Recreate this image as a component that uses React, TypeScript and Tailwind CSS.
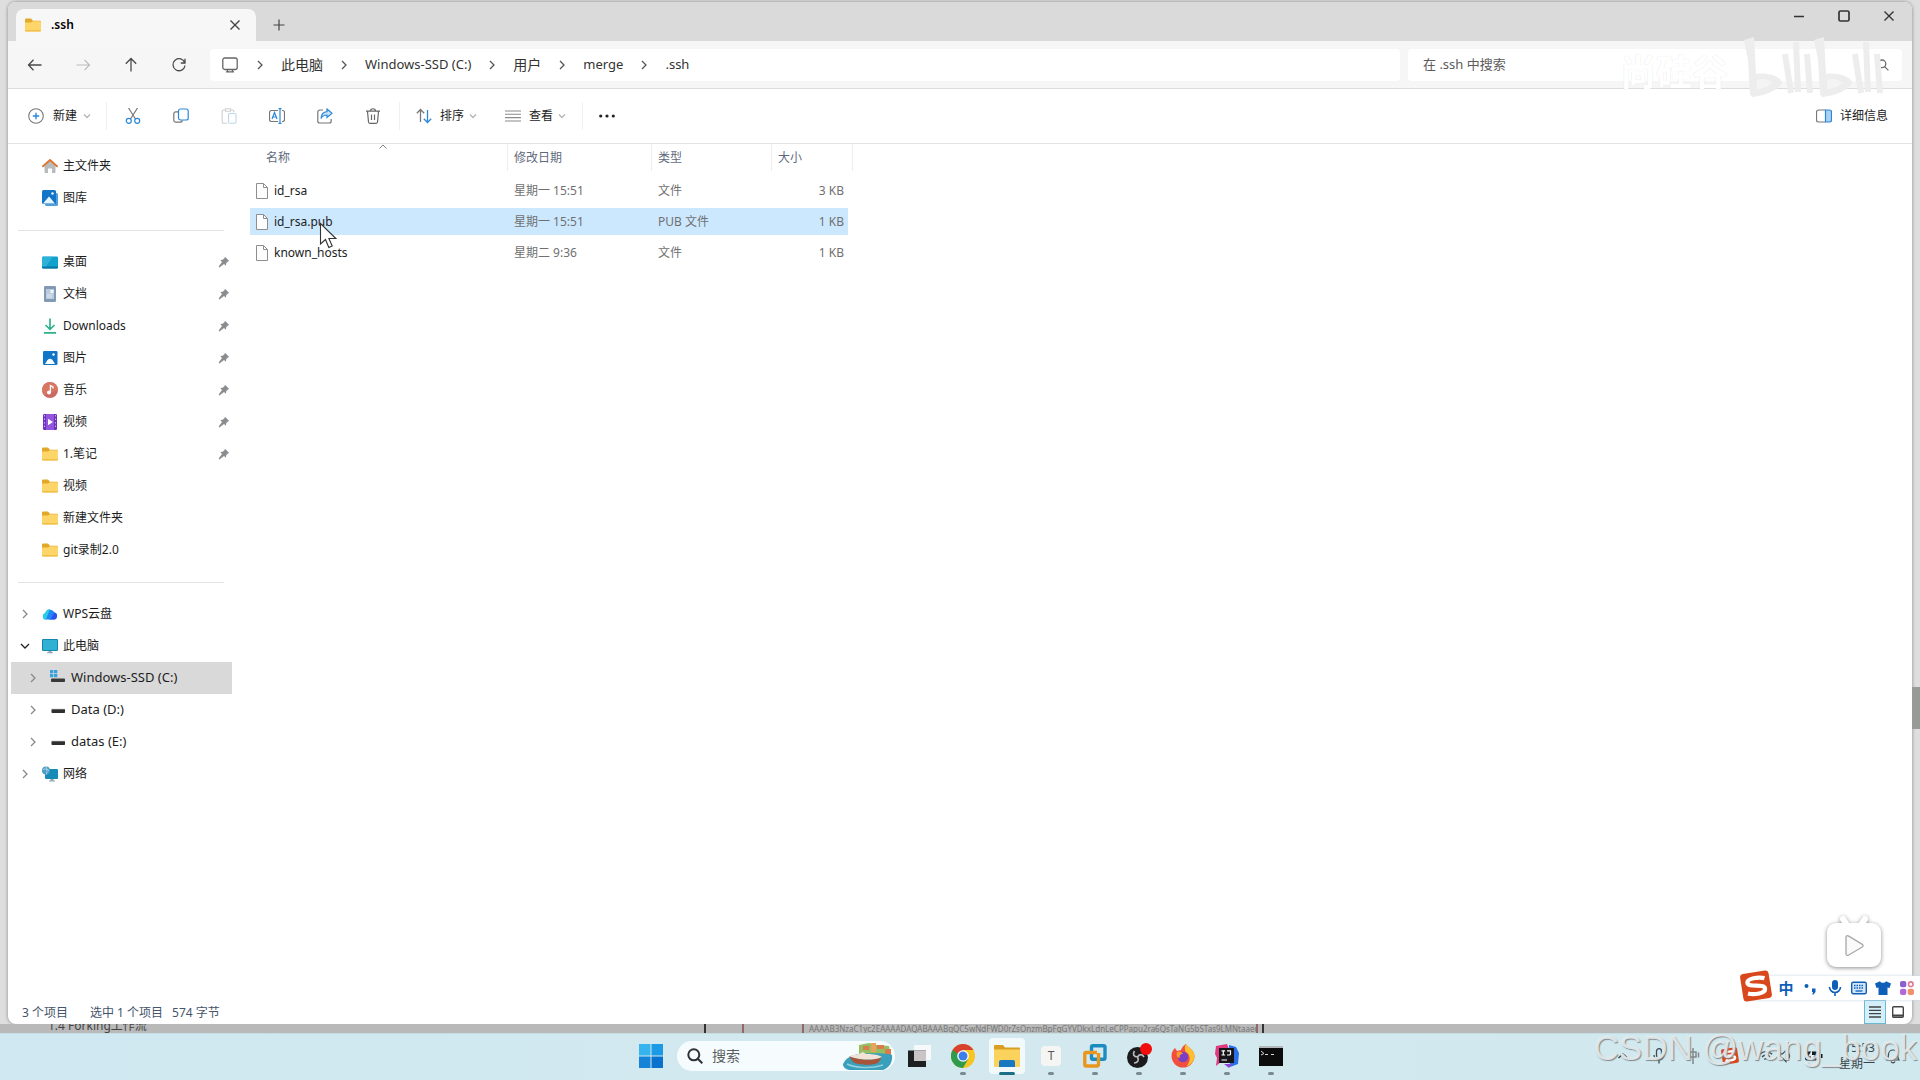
import React from 'react';

interface NavItem {
  label: string;
  icon: React.ReactNode;
  pinned?: boolean;
}

interface FileItem {
  name: string;
  date: string;
  type: string;
  size: string;
  selected?: boolean;
}

/* ---------- small glyphs ---------- */

const Chevron = ({ className = '' }: { className?: string }) => (
  <svg viewBox="0 0 8 10" className={`h-[10px] w-2 ${className}`} fill="none" stroke="currentColor" strokeWidth="1.3">
    <path d="M2 1l4 4-4 4" />
  </svg>
);

const SmallDown = () => (
  <svg viewBox="0 0 8 8" className="h-2 w-2 text-[#b5b5b5]" fill="none" stroke="currentColor" strokeWidth="1.3">
    <path d="M1 2.5l3 3 3-3" />
  </svg>
);

const Close = ({ className = '' }: { className?: string }) => (
  <svg viewBox="0 0 12 12" className={`h-3 w-3 ${className}`} fill="none" stroke="currentColor" strokeWidth="1.4">
    <path d="M1.5 1.5l9 9M10.5 1.5l-9 9" />
  </svg>
);

const Folder = () => (
  <svg viewBox="0 0 16 16" className="h-4 w-4">
    <path d="M0 2.500a1 1 0 0 1 1-1h5l2 2.200h7a1 1 0 0 1 1 1V7H0z" fill="#e3a92b" />
    <path d="M0 5.500h6l1.600-1.200H15a1 1 0 0 1 1 1V13.500a1 1 0 0 1-1 1H1a1 1 0 0 1-1-1z" fill="#fdd569" />
    <path d="M0 13.100h16v.4a1 1 0 0 1-1 1H1a1 1 0 0 1-1-1z" fill="#efbf4a" />
  </svg>
);

const Pin = () => (
  <svg viewBox="0 0 12 12" className="h-3 w-3 text-[#8a8d8f]" fill="currentColor">
    <path d="M7 .8L11.2 5l-1.4.6-1.6 1.7-.3 2.4L6 8 1.4 11.4.6 10.6 4 6 2.3 4.1l2.4-.3 1.7-1.6z" />
  </svg>
);

const Home = () => (
  <svg viewBox="0 0 16 16" className="h-4 w-4">
    <path d="M2.500 7L8 2.500 13.500 7v7.200a.8.8 0 0 1-.8.8H10v-4.500H6V15H3.300a.8.8 0 0 1-.8-.8z" fill="#b9bcbe" />
    <path d="M1 8.300L8 2l7 6.300" fill="none" stroke="#dc7a33" strokeWidth="2" strokeLinecap="round" strokeLinejoin="round" />
  </svg>
);

const Gallery = () => (
  <svg viewBox="0 0 16 16" className="h-4 w-4">
    <rect x="3" y="3" width="13" height="13" rx="1.5" fill="#4f9fdc" />
    <rect x="0" y="0" width="14" height="14" rx="1.5" fill="#1175c8" />
    <path d="M1 13.500L7 6.500l6 7z" fill="#eaf6ff" />
    <circle cx="10.5" cy="3.5" r="1.2" fill="#fff" />
  </svg>
);

const Desktop = () => (
  <svg viewBox="0 0 16 16" className="h-4 w-4">
    <rect x="0" y="2.5" width="16" height="12" rx="1.2" fill="#12a0cc" />
    <path d="M0 12.500h16v.8a1.200 1.200 0 0 1-1.200 1.200H1.200A1.200 1.200 0 0 1 0 13.300z" fill="#0b75a5" />
    <path d="M1 2.500h10L4 12.500H0v-9z" fill="#3dbde0" opacity=".6" />
  </svg>
);

const Docs = () => (
  <svg viewBox="0 0 16 16" className="h-4 w-4">
    <rect x="2" y="0" width="12" height="16" rx="1.2" fill="#8199b3" />
    <rect x="4" y="3" width="8" height="10" fill="#b9cbdc" />
    <path d="M8.500 4h3v3h-3z" fill="#f1f6fb" />
    <path d="M5 9h5M5 11h5" stroke="#dfe9f2" />
  </svg>
);

const Download = () => (
  <svg viewBox="0 0 16 16" className="h-4 w-4" fill="none" stroke="#2fb08c" strokeWidth="1.7">
    <path d="M8 .5v10.500M3.500 7L8 11.300 12.500 7M2 14.800h12" />
  </svg>
);

const Picture = () => (
  <svg viewBox="0 0 16 16" className="h-4 w-4">
    <rect x="1" y="1" width="14.5" height="14" rx="1.3" fill="#1175c8" />
    <path d="M3 14l2.500-4Q8 7.500 10.500 10l2.500 4z" fill="#fff" />
    <circle cx="11.5" cy="4.5" r="1.2" fill="#fff" />
  </svg>
);

const Music = () => (
  <svg viewBox="0 0 16 16" className="h-4 w-4">
    <circle cx="8" cy="8" r="8" fill="#c96a63" />
    <path d="M8 0a8 8 0 0 1 8 8L2 13.300A8 8 0 0 1 8 0z" fill="#dc7d62" opacity=".7" />
    <circle cx="7" cy="10.5" r="2" fill="#fff" />
    <path d="M8.400 10.500V3.500l2.600 1.300v1.800" fill="none" stroke="#fff" strokeWidth="1.3" />
  </svg>
);

const Video = () => (
  <svg viewBox="0 0 16 16" className="h-4 w-4">
    <rect x="1" y="0" width="14" height="16" rx="1.2" fill="#6f32bd" />
    <rect x="4" y="0" width="8" height="16" fill="#9355dd" />
    <path d="M2.500 1v14M13.500 1v14" stroke="#c9a8ee" strokeWidth="1" strokeDasharray="1.5 2" />
    <path d="M6 4.800L11 8l-5 3.200z" fill="#fff" />
  </svg>
);

const Cloud = () => (
  <svg viewBox="0 0 16 16" className="h-4 w-4">
    <path d="M4 13.500a3.200 3.200 0 0 1-.7-6.300A5 5 0 0 1 12.500 6.500 3.600 3.600 0 0 1 12 13.500z" fill="#1f87f5" />
    <path d="M4 13.500a3.200 3.200 0 0 1-.7-6.300A5 5 0 0 1 8 3z" fill="#2bcbe8" />
    <path d="M6 13.500c5 0 4-5 6.500-7A3.600 3.600 0 0 1 12 13.500z" fill="#2b52f0" />
  </svg>
);

const Monitor = () => (
  <svg viewBox="0 0 16 16" className="h-4 w-4">
    <rect x="0" y="1" width="16" height="12" rx="1" fill="#1487b0" />
    <rect x="1" y="2" width="14" height="10" fill="#2eb1d2" />
    <path d="M6.500 13h3v1.500h-3zM5 14.300h6v1H5z" fill="#8fa7b3" />
  </svg>
);

const SystemDrive = () => (
  <svg viewBox="0 0 16 16" className="h-4 w-4">
    <path d="M0 0h3.300v3.300H0zM4 0h3.300v3.300H4zM0 4h3.300v3.300H0zM4 4h3.300v3.300H4z" fill="#39a0e0" />
    <rect x="1" y="8.5" width="14" height="3.5" rx=".8" fill="#3a3a3a" />
  </svg>
);

const Drive = () => (
  <svg viewBox="0 0 16 16" className="h-4 w-4">
    <rect x="1.5" y="7" width="13.5" height="4" rx=".8" fill="#2f2f2f" />
    <path d="M2 7.300h12.500" stroke="#8a8a8a" strokeWidth=".7" />
  </svg>
);

const Network = () => (
  <svg viewBox="0 0 16 16" className="h-4 w-4">
    <rect x="3" y="3" width="13" height="10" rx="1" fill="#178bb8" />
    <path d="M8.500 13h3v1.500h-3zM7 14.400h6v1H7z" fill="#8fa7b3" />
    <circle cx="4" cy="4.5" r="4" fill="#4c9cc4" />
    <path d="M1 3.500c2-1 4-.500 6 1M4 .5c1.500 2.500 1 6 .300 8" stroke="#bfe0ef" strokeWidth=".8" fill="none" />
  </svg>
);

const FilePage = () => (
  <svg viewBox="0 0 14 16" className="h-4 w-[14px] shrink-0" fill="#fdfdfd" stroke="#8e8e8e" strokeWidth="1">
    <path d="M1.500.5h7L12.500 4.500v11h-11z" />
    <path d="M8.500.5v4h4" fill="none" />
  </svg>
);

const SogouS = ({ className = '' }: { className?: string }) => (
  <svg viewBox="0 0 30 30" className={className}>
    <g transform="rotate(-9 15 15)">
      <rect x="1.5" y="2" width="27" height="26" rx="3" fill="#d9481c" />
      <path d="M24 9C19 6.800 7.500 6.500 7.500 11c0 4.800 15.500 2.500 15.500 7.500 0 4.800-11 4.800-16.500 2.300" fill="none" stroke="#fff" strokeWidth="4" />
    </g>
  </svg>
);

/* ---------- data ---------- */

const top: NavItem[] = [
  { label: '主文件夹', icon: <Home /> },
  { label: '图库', icon: <Gallery /> },
];

const quick: NavItem[] = [
  { label: '桌面', icon: <Desktop />, pinned: true },
  { label: '文档', icon: <Docs />, pinned: true },
  { label: 'Downloads', icon: <Download />, pinned: true },
  { label: '图片', icon: <Picture />, pinned: true },
  { label: '音乐', icon: <Music />, pinned: true },
  { label: '视频', icon: <Video />, pinned: true },
  { label: '1.笔记', icon: <Folder />, pinned: true },
  { label: '视频', icon: <Folder /> },
  { label: '新建文件夹', icon: <Folder /> },
  { label: 'git录制2.0', icon: <Folder /> },
];

const files: FileItem[] = [
  { name: 'id_rsa', date: '星期一 15:51', type: '文件', size: '3 KB' },
  { name: 'id_rsa.pub', date: '星期一 15:51', type: 'PUB 文件', size: '1 KB', selected: true },
  { name: 'known_hosts', date: '星期二 9:36', type: '文件', size: '1 KB' },
];

const crumbs = [
  { label: '此电脑', size: 'text-sm' },
  { label: 'Windows-SSD (C:)', size: 'text-[13px]' },
  { label: '用户', size: 'text-sm' },
  { label: 'merge', size: 'text-[13px]' },
  { label: '.ssh', size: 'text-[13px]' },
];

/* ---------- window parts ---------- */

const TitleBar = () => (
  <div className="flex h-[39px] items-end justify-between bg-[#dadada] pl-2">
    <div className="flex items-end">
      <div className="flex h-8 w-60 items-center rounded-t-lg bg-[#f7f7f7] pr-[13px] pl-[9px]">
        <Folder />
        <span className="ml-[10px] flex-1 text-xs font-semibold">.ssh</span>
        <button aria-label="关闭标签页" className="p-[2px] text-[#444]"><Close /></button>
      </div>
      <button aria-label="新建标签页" className="flex h-8 w-[45px] items-center justify-center text-[#444]">
        <svg viewBox="0 0 12 12" className="h-3 w-3" stroke="currentColor" strokeWidth="1.2"><path d="M6 .5v11M.5 6h11" /></svg>
      </button>
    </div>
    <div className="flex h-full items-start text-[#333]">
      <button aria-label="最小化" className="flex h-7 w-[45px] items-center justify-center">
        <svg viewBox="0 0 12 12" className="h-3 w-3" stroke="currentColor" strokeWidth="1.6"><path d="M1 6.500h10" /></svg>
      </button>
      <button aria-label="最大化" className="flex h-7 w-[45px] items-center justify-center">
        <svg viewBox="0 0 12 12" className="h-3 w-3" fill="none" stroke="currentColor" strokeWidth="1.7"><rect x="1" y="1" width="10" height="10" rx="1.5" /></svg>
      </button>
      <button aria-label="关闭" className="flex h-7 w-[46px] items-center justify-center"><Close /></button>
    </div>
  </div>
);

const NavBar = () => (
  <div className="flex h-12 items-center border-b border-[#dcdcdc] bg-[#f6f6f6] pr-[10px]">
    <div className="flex w-[202px] items-center pl-[3px] text-[#4a4a4a]">
      <button aria-label="后退" className="flex w-12 justify-center">
        <svg viewBox="0 0 16 16" className="h-4 w-4" fill="none" stroke="currentColor" strokeWidth="1.3"><path d="M14.500 8h-13M6.500 2.800L1.500 8l5 5.200" /></svg>
      </button>
      <button aria-label="前进" className="flex w-12 justify-center text-[#bcbcbc]">
        <svg viewBox="0 0 16 16" className="h-4 w-4" fill="none" stroke="currentColor" strokeWidth="1.2"><path d="M1.500 8h13M9.500 2.800l5 5.200-5 5.200" /></svg>
      </button>
      <button aria-label="向上" className="flex w-12 justify-center">
        <svg viewBox="0 0 16 16" className="h-4 w-4" fill="none" stroke="currentColor" strokeWidth="1.3"><path d="M8 14.500v-13M2.800 6.800L8 1.500l5.200 5.300" /></svg>
      </button>
      <button aria-label="刷新" className="flex w-12 justify-center">
        <svg viewBox="0 0 16 16" className="h-4 w-4" fill="none" stroke="currentColor" strokeWidth="1.3"><path d="M13.800 6A6 6 0 1 0 14 8.500M14 1.800V6h-4.200" /></svg>
      </button>
    </div>
    <nav aria-label="路径" className="flex h-8 flex-1 items-center rounded bg-white pl-3 text-[#333]">
      <svg viewBox="0 0 16 16" className="mr-px h-4 w-4 shrink-0" fill="none" stroke="#666" strokeWidth="1.3">
        <rect x=".8" y="1" width="14.4" height="11.5" rx="2" /><path d="M4 14.800h8M5.500 12.500v2M10.500 12.500v2" />
      </svg>
      {crumbs.map((c) => (
        <React.Fragment key={c.label}>
          <Chevron className="mx-[17px] shrink-0 text-[#555]" />
          <a href="#" className={`${c.size} whitespace-nowrap`}>{c.label}</a>
        </React.Fragment>
      ))}
    </nav>
    <label className="ml-2 flex h-8 w-[494px] items-center rounded bg-white pr-[13px] pl-[15px]">
      <input aria-label="在 .ssh 中搜索" placeholder="在 .ssh 中搜索" className="flex-1 bg-transparent text-[13px] outline-none placeholder:text-[#5c5c5c]" />
      <svg viewBox="0 0 12 12" className="h-3 w-3" fill="none" stroke="#6d6d6d" strokeWidth="1.3"><circle cx="5" cy="4.8" r="3.8" /><path d="M7.600 7.600l3.800 3.800" /></svg>
    </label>
  </div>
);

const Divider = () => <div className="h-7 w-px bg-[#f1f1f1]" />;

const Toolbar = () => (
  <div className="flex h-[55px] shrink-0 items-center border-b border-[#e3e3e3] bg-white pr-6 pl-5 text-xs text-[#222]">
    <button className="flex w-[78px] items-center">
      <svg viewBox="0 0 16 16" className="h-4 w-4" fill="none" stroke="#777" strokeWidth="1.1"><circle cx="8" cy="8" r="7.3" /><path d="M8 4.800v6.400M4.800 8h6.400" stroke="#2b88d8" strokeWidth="1.4" /></svg>
      <span className="mr-[6px] ml-[9px]">新建</span>
      <SmallDown />
    </button>
    <Divider />
    <div className="flex flex-1 items-center">
      <button aria-label="剪切" className="ml-[2px] flex w-12 justify-center">
        <svg viewBox="0 0 16 16" className="h-4 w-4" fill="none" strokeWidth="1.2"><path d="M3.500 0l7 11M12.500 0l-7 11" stroke="#777" /><circle cx="3.8" cy="12.8" r="2.5" stroke="#2b88d8" /><circle cx="12.2" cy="12.8" r="2.5" stroke="#2b88d8" /></svg>
      </button>
      <button aria-label="复制" className="flex w-12 justify-center">
        <svg viewBox="0 0 16 16" className="h-4 w-4" fill="none" strokeWidth="1.2"><path d="M5 3.800H2.800A2 2 0 0 0 .8 5.800v6.400a2 2 0 0 0 2 2h4.400a2 2 0 0 0 2-2" stroke="#777" /><rect x="5.5" y="1" width="9.7" height="11" rx="2" stroke="#2b88d8" /></svg>
      </button>
      <button aria-label="粘贴" disabled className="flex w-12 justify-center">
        <svg viewBox="0 0 16 16" className="h-4 w-4" fill="none" strokeWidth="1.1"><path d="M6 15.200H2.500a1.300 1.300 0 0 1-1.300-1.300V3.300A1.300 1.300 0 0 1 2.500 2H4m6 0h1.500a1.300 1.300 0 0 1 1.300 1.300v1M4.500.8h5v2.400h-5z" stroke="#cfcfcf" /><rect x="7.5" y="5.5" width="7.5" height="9.7" rx="1.2" stroke="#bcd6ea" /></svg>
      </button>
      <button aria-label="重命名" className="flex w-12 justify-center">
        <svg viewBox="0 0 16 16" className="h-4 w-4" fill="none" strokeWidth="1.2"><path d="M9 2.500H2.500a2 2 0 0 0-2 2v7a2 2 0 0 0 2 2H9M13 2.500h.500a2 2 0 0 1 2 2v7a2 2 0 0 1-2 2H13" stroke="#777" /><path d="M11 .600v14.800M9.500.600h3M9.500 15.400h3M3 11l2.500-6.500L8 11M3.900 9h3.200" stroke="#2b88d8" /></svg>
      </button>
      <button aria-label="共享" className="flex w-12 justify-center">
        <svg viewBox="0 0 16 16" className="h-4 w-4" fill="none" strokeWidth="1.2"><path d="M6 2H2.800a2 2 0 0 0-2 2v9a2 2 0 0 0 2 2h9.400a2 2 0 0 0 2-2v-2" stroke="#777" /><path d="M10 1l5 4.300-5 4.200V7C7 7 5.200 8.200 4 10.500 4.300 6.500 6.500 4 10 3.700z" stroke="#2b88d8" fill="#cfe5f7" /></svg>
      </button>
      <button aria-label="删除" className="mr-[2px] flex w-12 justify-center">
        <svg viewBox="0 0 16 16" className="h-4 w-4" fill="none" stroke="#666" strokeWidth="1.2"><path d="M1 3.200h14M5.500 3C5.500 0 10.500 0 10.500 3M2.500 3.500l1 10.500a1.500 1.500 0 0 0 1.500 1.300h6a1.500 1.500 0 0 0 1.500-1.300l1-10.500M6.500 6.500v5.500M9.500 6.500v5.500" /></svg>
      </button>
      <Divider />
      <button className="ml-4 flex w-[89px] items-center">
        <svg viewBox="0 0 16 16" className="h-4 w-4" fill="none" strokeWidth="1.3"><path d="M4.500 14V1.500M.8 5.200l3.700-3.700 3.700 3.700" stroke="#777" /><path d="M11.500 2v12.500M7.800 10.800l3.700 3.700 3.700-3.700" stroke="#2b88d8" /></svg>
        <span className="mr-[5px] ml-2">排序</span>
        <SmallDown />
      </button>
      <button className="flex w-[77px] items-center">
        <svg viewBox="0 0 16 16" className="h-4 w-4" stroke="#8a8a8a" strokeWidth="1.1"><path d="M0 3h16M0 6.300h16M0 9.600h16M0 13h16" /></svg>
        <span className="mr-[5px] ml-2">查看</span>
        <SmallDown />
      </button>
      <Divider />
      <button aria-label="查看更多" className="ml-[15px] p-px">
        <svg viewBox="0 0 16 4" className="h-1 w-4" fill="#222"><circle cx="1.7" cy="2" r="1.6" /><circle cx="8" cy="2" r="1.6" /><circle cx="14.3" cy="2" r="1.6" /></svg>
      </button>
    </div>
    <button className="flex items-center gap-2">
      <svg viewBox="0 0 16 16" className="h-4 w-4" fill="none" strokeWidth="1.2"><path d="M9.500 2H2.500a2 2 0 0 0-2 2v8a2 2 0 0 0 2 2h7" stroke="#777" /><path d="M9.500 2h4a2 2 0 0 1 2 2v8a2 2 0 0 1-2 2h-4z" stroke="#2b88d8" fill="#a8d1f2" /></svg>
      详细信息
    </button>
  </div>
);

const SideRow = ({ item }: { item: NavItem }) => (
  <a href="#" className="flex h-8 items-center pr-[2px] pl-[34px]">
    {item.icon}
    <span className="ml-[5px] flex-1">{item.label}</span>
    {item.pinned && <Pin />}
  </a>
);

const TreeRow = ({ label, icon, level = 0, open, active }: { label: string; icon: React.ReactNode; level?: number; open?: boolean; active?: boolean }) => (
  <a href="#" className={`ml-[3px] flex h-8 items-center ${level ? 'pl-[18px] text-[13px]' : 'pl-[10px]'} ${active ? 'bg-[#d9d9d9]' : ''}`}>
    <Chevron className={open ? 'rotate-90 text-[#222]' : 'text-[#8a8a8a]'} />
    <span className="ml-[13px]">{icon}</span>
    <span className="ml-[5px]">{label}</span>
  </a>
);

const Rule = () => (
  <div className="flex h-8 items-center pr-2 pl-[10px]">
    <div className="h-px w-full bg-[#e2e2e2]" />
  </div>
);

const Sidebar = () => (
  <aside className="w-[224px] shrink-0 pt-[6px] text-xs text-[#1c1c1c]">
    {top.map((i) => <SideRow key={i.label} item={i} />)}
    <Rule />
    {quick.map((i, n) => <SideRow key={n} item={i} />)}
    <Rule />
    <TreeRow label="WPS云盘" icon={<Cloud />} />
    <TreeRow label="此电脑" icon={<Monitor />} open />
    <TreeRow label="Windows-SSD (C:)" icon={<SystemDrive />} level={1} active />
    <TreeRow label="Data (D:)" icon={<Drive />} level={1} />
    <TreeRow label="datas (E:)" icon={<Drive />} level={1} />
    <TreeRow label="网络" icon={<Network />} />
  </aside>
);

const Cursor = () => (
  <svg viewBox="0 0 20 28" className="absolute top-[14px] left-[69px] h-7 w-5" fill="#fff" stroke="#333" strokeWidth="1.1">
    <path d="M1.500 1.500v20.500l5-4.500 3.300 8 3.400-1.500-3.300-7.500h7z" />
  </svg>
);

const Cell = ({ sel, children, className = '' }: { sel?: boolean; children: React.ReactNode; className?: string }) => (
  <div className={`flex h-[27px] items-center ${sel ? 'bg-[#cce8ff]' : ''} ${className}`}>{children}</div>
);

const FileTable = () => (
  <main className="flex-1 pl-[18px]">
    <table className="w-[603px] table-fixed border-separate border-spacing-0 text-left text-xs text-[#707070]">
      <thead>
        <tr className="h-[31px] align-top text-[#5f6b7c]">
          <th className="w-[258px] p-0 font-normal">
            <div className="relative flex h-[27px] items-center border-r border-[#eeeeee] pl-4">
              名称
              <svg viewBox="0 0 8 6" className="absolute top-0 left-[129px] h-[6px] w-2" fill="none" stroke="#888"><path d="M.5 4.500l3.500-3.500 3.500 3.500" /></svg>
            </div>
          </th>
          <th className="w-[144px] p-0 font-normal"><div className="flex h-[27px] items-center border-r border-[#eeeeee] pl-[6px]">修改日期</div></th>
          <th className="w-[120px] p-0 font-normal"><div className="flex h-[27px] items-center border-r border-[#eeeeee] pl-[6px]">类型</div></th>
          <th className="p-0 font-normal"><div className="flex h-[27px] items-center border-r border-[#eeeeee] pl-[6px]">大小</div></th>
        </tr>
      </thead>
      <tbody>
        {files.map((f) => (
          <tr key={f.name} className="h-[31px]">
            <td className="p-0 text-[#222]">
              <Cell sel={f.selected} className="relative gap-[5px] pl-[5px]">
                <FilePage />
                {f.name}
                {f.selected && <Cursor />}
              </Cell>
            </td>
            <td className="p-0"><Cell sel={f.selected} className="pl-[6px]">{f.date}</Cell></td>
            <td className="p-0"><Cell sel={f.selected} className="pl-[6px]">{f.type}</Cell></td>
            <td className="p-0 pr-[5px]"><Cell sel={f.selected} className="justify-end pr-1">{f.size}</Cell></td>
          </tr>
        ))}
      </tbody>
    </table>
  </main>
);

const StatusBar = () => (
  <footer className="flex h-6 shrink-0 items-center pl-[14px] text-xs text-[#44546a]">
    <span className="pt-[2px]">3 个项目</span>
    <span className="ml-[22px] pt-[2px]">选中 1 个项目</span>
    <span className="ml-[9px] flex-1 pt-[2px]">574 字节</span>
    <button aria-label="详细信息视图" className="flex h-6 w-[22px] items-center justify-center border border-[#6db7d4] bg-[#d3effa]">
      <svg viewBox="0 0 12 12" className="h-3 w-3" stroke="#444" strokeWidth="1.3"><path d="M0 1h12M0 4.300h12M0 7.600h12M0 11h12" /></svg>
    </button>
    <button aria-label="大图标视图" className="flex h-6 w-[23px] items-center justify-center">
      <svg viewBox="0 0 12 12" className="h-3 w-3" fill="none" stroke="#444" strokeWidth="1.4"><rect x=".7" y=".7" width="10.6" height="10.6" rx="1" /><path d="M1 9.500h10" strokeWidth="2" /></svg>
    </button>
    <span className="w-[3px]" />
  </footer>
);

/* ---------- overlays ---------- */

const BiliMark = () => (
  <div className="pointer-events-none absolute top-[36px] right-[35px] flex items-center gap-4">
    <span className="pt-3 text-4xl leading-10 font-bold text-white [text-shadow:0_0_1px_#dddddd]">尚硅谷</span>
    <svg viewBox="0 0 141 62" className="h-[62px] w-[141px]" fill="none" stroke="#ededed">
      {[0, 70].map((x) => (
        <g key={x} transform={`translate(${x} 0)`}>
          <path d="M0 4L10 1l2 37c12-2 26 3 26 9-2 6-16 13-30 14L6 58 4 24z" fill="#ededed" stroke="none" />
          <path d="M13 44c5-2 12-1 15 3-4 4-10 6-15 6z" fill="#f4f4f4" stroke="none" />
          <path d="M41 18l6 39M52 6l2 50M63 18l3 39" strokeWidth="6" />
        </g>
      ))}
    </svg>
  </div>
);

const BiliTv = () => (
  <svg viewBox="0 0 62 60" className="absolute right-[35px] bottom-[107px] h-[60px] w-[62px] drop-shadow-[0_1px_2px_rgba(0,0,0,0.45)]">
    <path d="M20 6l4 6M42 6l-4 6" stroke="#fff" strokeWidth="6" strokeLinecap="round" />
    <rect x="4" y="10" width="54" height="44" rx="9" fill="#fff" />
    <path d="M23 24v17a1.500 1.500 0 0 0 2.300 1.200l14-8.200a1.500 1.500 0 0 0 0-2.600l-14-8.500A1.500 1.500 0 0 0 23 24z" fill="#fafafa" stroke="#a8a8a8" strokeWidth="1.3" />
  </svg>
);

const ImeBar = () => (
  <div className="absolute right-0 bottom-[80px] flex h-6 items-center bg-white pr-[6px] text-[#0f5fb8] shadow-[0_0_3px_#c8d8e8]">
    <SogouS className="mb-1 -ml-[10px] h-8 w-8" />
    <button className="ml-[6px] w-4 text-center text-[15px] leading-4 font-bold">中</button>
    <svg viewBox="0 0 14 14" className="ml-[9px] h-[14px] w-[14px]" fill="currentColor"><circle cx="3.5" cy="5" r="2" /><path d="M9 7.500h3.500V11L10.500 13.500H9.300L10 11H9z" /></svg>
    <svg viewBox="0 0 16 16" className="ml-[10px] h-4 w-4" fill="currentColor"><rect x="5" y="0" width="6" height="10" rx="3" /><path d="M2.500 7a5.500 5.500 0 0 0 11 0M8 12.500V16" fill="none" stroke="currentColor" strokeWidth="1.6" /></svg>
    <svg viewBox="0 0 16 16" className="ml-2 h-4 w-4"><rect x=".7" y="2.2" width="14.6" height="11.6" rx="1.5" fill="#d4e6f8" stroke="currentColor" strokeWidth="1.4" /><path d="M3 5.500h10M3 8h10" stroke="currentColor" strokeWidth="1.5" strokeDasharray="1.5 1" /><path d="M4.500 11h7" stroke="currentColor" strokeWidth="1.3" /></svg>
    <svg viewBox="0 0 16 16" className="ml-2 h-4 w-4" fill="currentColor"><path d="M5 1.200c1 2 5 2 6 0L16 3.500 14.500 8 12.500 7.500V15h-9V7.500L1.500 8 0 3.500z" /></svg>
    <svg viewBox="0 0 14 14" className="ml-[9px] h-[14px] w-[14px]"><rect width="6.3" height="6.3" rx="2" fill="#8c5fd0" /><circle cx="10.8" cy="3.2" r="2.3" fill="none" stroke="#e0789a" strokeWidth="1.6" /><rect y="7.7" width="6.3" height="6.3" rx="2" fill="#b468d8" /><rect x="7.7" y="7.7" width="6.3" height="6.3" rx="2" fill="#f0906a" /></svg>
  </div>
);

/* ---------- taskbar ---------- */

const AppButton = ({ label, children, active, dot = true }: { label: string; children: React.ReactNode; active?: boolean; dot?: boolean }) => (
  <button aria-label={label} className="relative flex h-11 w-11 items-center justify-center">
    <span className={`flex h-9 w-9 items-center justify-center rounded ${active ? 'bg-white/70' : ''}`}>{children}</span>
    {dot && <span className={`absolute bottom-[3px] h-[3px] rounded-full ${active ? 'w-4 bg-[#1a6f86]' : 'w-[6px] bg-[#7b8a90]'}`} />}
  </button>
);

const Taskbar = () => (
  <div className="grid h-[47px] shrink-0 grid-cols-[1fr_auto_1fr] items-center border-t border-[#c4dfe4] bg-linear-to-r from-[#cfe8f1] via-[#d3e9ef] to-[#d0e9ee] pb-[2px]">
    <div />
    <div className="flex items-center pl-[2px]">
      <AppButton label="开始" dot={false}>
        <svg viewBox="0 0 24 24" className="h-6 w-6"><path d="M0 0h11.500v11.500H0z" fill="#35b4ee" /><path d="M12.500 0H24v11.500H12.500z" fill="#1c9ae6" /><path d="M0 12.500h11.500V24H0z" fill="#1583d6" /><path d="M12.500 12.500H24V24H12.500z" fill="#0a72cd" /></svg>
      </AppButton>
      <label className="mr-[2px] ml-1 flex h-[30px] w-[218px] items-center rounded-full bg-[#f6fcfe] pl-[10px]">
        <svg viewBox="0 0 16 16" className="h-4 w-4 shrink-0" fill="none" stroke="#2c3338" strokeWidth="2"><circle cx="6.8" cy="6.8" r="5.5" /><path d="M10.800 10.800l4.500 4.500" /></svg>
        <input aria-label="搜索" placeholder="搜索" className="ml-[9px] w-0 flex-1 bg-transparent text-sm outline-none placeholder:text-[#5a5f63]" />
        <svg viewBox="0 0 50 28" className="mr-[2px] h-7 w-[50px] shrink-0">
          <path d="M16 14V3l10-2 8 2 12 1 2 12-14 4z" fill="#93bf62" />
          <path d="M20 4h6v4h-6zM34 3h7v4h-7zM42 7h6v6h-6z" fill="#dd7a4b" />
          <path d="M28 1h5v9h-5z" fill="#e9a45b" />
          <path d="M0 22c3-6 8-9 16-10 12-1 28-1 33 1 1 7-3 13-9 15H8c-4 0-8-2-8-6z" fill="#3a9fbb" />
          <path d="M6 14c8 4 24 5 33 1l-4 6c-7 3-20 2-25-1z" fill="#a65538" />
          <path d="M6 14c8 4 24 5 33 1-5-3-11-3-16-3l-3-2-4 2z" fill="#f1e3d8" />
          <path d="M4 22c8 4 24 5 36 1" stroke="#8fd0de" strokeWidth="1.5" fill="none" />
        </svg>
      </label>
      <AppButton label="任务视图" dot={false}>
        <svg viewBox="0 0 24 24" className="h-6 w-6"><path d="M7 1h17v15H7z" fill="#f6f9fa" /><path d="M1 6.500h18V23H1z" fill="#1d1f20" /><path d="M7 6.500h12V17H7z" fill="#c9c5c6" /></svg>
      </AppButton>
      <AppButton label="Chrome">
        <svg viewBox="0 0 24 24" className="h-6 w-6"><circle cx="12" cy="12" r="12" fill="#f6c522" /><path d="M1.600 6A12 12 0 0 0 12 24l5.200-9z" fill="#2f9b4d" /><path d="M1.600 6L7 15l5-9z" fill="#2f9b4d" /><path d="M1.600 6A12 12 0 0 1 22.400 6H12L7 10z" fill="#d8402f" /><circle cx="12" cy="12" r="5.8" fill="#fff" /><circle cx="12" cy="12" r="4.5" fill="#3d7fea" /></svg>
      </AppButton>
      <AppButton label="文件资源管理器" active>
        <svg viewBox="0 0 26 24" className="h-6 w-[26px]"><path d="M0 2a1 1 0 0 1 1-1h8l2 2.500H25a1 1 0 0 1 1 1V8H0z" fill="#d99e22" /><path d="M0 5.500h26V22a1 1 0 0 1-1 1H1a1 1 0 0 1-1-1z" fill="#fbd35c" /><path d="M5 23v-5a2 2 0 0 1 2-2h12a2 2 0 0 1 2 2v5z" fill="#1a78c0" /></svg>
      </AppButton>
      <AppButton label="Typora">
        <span className="flex h-5 w-5 items-center justify-center rounded-sm bg-[#f5f5f4] text-xs text-[#555]">T</span>
      </AppButton>
      <AppButton label="VMware">
        <svg viewBox="0 0 24 24" className="h-6 w-6" fill="none" strokeWidth="3.4"><rect x="8.500" y="1.700" width="13.500" height="13.500" rx="1.500" stroke="#1c8cc0" /><path d="M15.500 9v11.500a1.500 1.500 0 0 1-1.500 1.500H3.300a1.500 1.500 0 0 1-1.500-1.500V10a1.500 1.500 0 0 1 1.500-1.500H14" stroke="#e9961f" /></svg>
      </AppButton>
      <AppButton label="OBS">
        <svg viewBox="0 0 26 26" className="h-[26px] w-[26px]"><circle cx="11.500" cy="14.500" r="10.500" fill="#1b1b1e" /><path d="M11.500 14c-4 0-5-3-3-6M11.500 14c2-3.500 5-3 6.500 0M11.500 14c2 3.500 0 6-3.500 6" fill="none" stroke="#b9b9bd" strokeWidth="1.7" /><circle cx="20" cy="6" r="6" fill="#f20c0c" /></svg>
      </AppButton>
      <AppButton label="Firefox">
        <svg viewBox="0 0 24 24" className="h-6 w-6"><path d="M4 4l2 3 4-1c1-3 3-5 5-6 1 3 8 5 8.500 12A11.500 11.500 0 1 1 .5 12C.5 8 2 6 4 4z" fill="#f2503f" /><path d="M15 0c1 3 8 5 8.500 12 0 5-4 9-8 10.500 4-5 5-11-1-15-1-3-1-5 .5-7.500z" fill="#fdc02f" /><circle cx="12" cy="13" r="5.200" fill="#7a3fc4" /><path d="M6 8c3-1 5 0 6 2-3 0-4 2-3 4-3 0-4-3-3-6z" fill="#fd9a2a" /></svg>
      </AppButton>
      <AppButton label="IntelliJ IDEA">
        <svg viewBox="0 0 24 24" className="h-6 w-6"><path d="M1 2l11-2 3 8L6 18l-5 4 1-8-2-4z" fill="#e0397d" /><path d="M14 1l7 2 3 6-1 11-8 3z" fill="#2a6fe8" /><path d="M9 20h8l-3 4z" fill="#8b47d8" /><path d="M4 4h15v15H4z" fill="#15151a" /><path d="M6.500 6.800h3.600M6.500 11h3.600M8.300 6.800V11M12 6.800h3.500v3q0 1.400-1.800 1.200H12M6.500 16h5.500" fill="none" stroke="#fff" strokeWidth="1.2" /></svg>
      </AppButton>
      <AppButton label="命令提示符">
        <svg viewBox="0 0 24 20" className="h-5 w-6"><path d="M0 0h24v20H0z" fill="#0c0c0d" /><path d="M0 0h24v2H0z" fill="#b4b8ba" /><path d="M2 5l3 2.500L2 9M6 8.500h3M12 8.500h3" fill="none" stroke="#d8d8d8" /></svg>
      </AppButton>
    </div>
    <div className="flex items-center justify-end pr-[19px] text-[#3e4a50]">
      <svg viewBox="0 0 12 12" className="mr-[22px] h-3 w-3" fill="none" stroke="currentColor" strokeWidth="1.6"><path d="M1.500 8L6 4l4.500 4" /></svg>
      <svg viewBox="0 0 16 16" className="mr-[18px] h-4 w-4" fill="none" stroke="currentColor" strokeWidth="1.3"><rect x="5.500" y=".7" width="5" height="9" rx="2.500" /><path d="M3 7a5 5 0 0 0 10 0M8 12v3.500" /></svg>
      <svg viewBox="0 0 16 16" className="mr-5 h-4 w-4" fill="none" stroke="#80888c" strokeWidth="1.5"><path d="M8 0v16M5 4h6v5H5zM2.500 4.500v5M13.500 4.500v5" /></svg>
      <SogouS className="mr-5 h-[18px] w-[18px]" />
      <svg viewBox="0 0 16 16" className="mr-[6px] h-[14px] w-[14px]" fill="none" stroke="currentColor" strokeWidth="1.6"><path d="M1 6c4-4 10-4 14 0M3.500 9c3-2.700 6-2.700 9 0M6 12c1.300-1.300 2.700-1.300 4 0" /></svg>
      <svg viewBox="0 0 16 16" className="mr-3 h-[14px] w-[14px]" fill="none" stroke="currentColor" strokeWidth="1.3"><path d="M1 5.500h3l4-4v13l-4-4H1zM11 5c1.500 2 1.500 4 0 6" /></svg>
      <svg viewBox="0 0 18 12" className="mr-4 h-3 w-[18px]"><rect y="1.5" width="15" height="9" rx="2" fill="#15191b" /><path d="M16 4h1.500v4H16z" fill="#15191b" /><path d="M7 0L3 6.500h3L5 12l5-7H7z" fill="#dfeaee" /></svg>
      <div className="mr-[10px] text-xs leading-4 text-[#3a4449]">
        <div className="text-right">15:53</div>
        <div>星期一</div>
      </div>
      <svg viewBox="0 0 16 16" className="h-4 w-4" fill="none" stroke="currentColor" strokeWidth="1.2"><path d="M2 12h12c-1.500-2-1.500-3-1.500-5.500a4.500 4.500 0 0 0-9 0C3.500 9 3.500 10 2 12zM6 13.500c.8 1.700 3.200 1.700 4 0" /></svg>
    </div>
  </div>
);

export default function App() {
  return (
    <div className="relative flex h-screen flex-col overflow-hidden font-['Noto_Sans','Noto_Sans_CJK_SC',sans-serif]">
      <div className="flex min-h-0 flex-1 flex-col bg-[#dedede] pt-[2px]">
        <div className="mr-2 ml-2 flex min-h-0 flex-1 flex-col overflow-hidden rounded-lg bg-white shadow-[0_0_3px_1px_#a9a9a9]">
          <TitleBar />
          <NavBar />
          <Toolbar />
          <div className="flex min-h-0 flex-1">
            <Sidebar />
            <FileTable />
          </div>
          <StatusBar />
        </div>
        {/* sliver of the window behind */}
        <div className="flex h-[9px] shrink-0 items-end overflow-hidden bg-[#b9b9b9] pl-12 text-xs text-[#444]">
          <span className="w-[656px] leading-[14px]">1.4 Forking工作流</span>
          <span className="h-full w-[2px] bg-[#333]" />
          <span className="ml-9 h-full w-[2px] bg-[#8f6a6a]" />
          <span className="ml-[58px] h-full w-[2px] bg-[#8f6a6a]" />
          <span className="ml-[5px] w-[447px] overflow-hidden text-[8px] leading-[9px] whitespace-nowrap text-[#777]">
            AAAAB3NzaC1yc2EAAAADAQABAAABgQC5wNdFWD0rZsOnzmBpFqGYVDkxLdnLeCPPapu2ra6QsTaNG5bSTas9LMNtaaeucZsnlwBz5MGtD7mSFaoapnZ7rSfu
          </span>
          <span className="h-full w-[2px] bg-[#8f6a6a]" />
          <span className="ml-1 h-full w-[2px] bg-[#333]" />
        </div>
      </div>
      <Taskbar />

      <div className="absolute top-[687px] right-0 h-[42px] w-2 bg-[#989a98]" />
      <BiliMark />
      <BiliTv />
      <ImeBar />
      <div className="pointer-events-none absolute right-[3px] bottom-3 font-['Liberation_Sans',sans-serif] text-[35px] leading-10 whitespace-nowrap text-[#e9eef0]/90 [text-shadow:1px_1px_1px_#808a8e]">
        CSDN @wang_book
      </div>
    </div>
  );
}
